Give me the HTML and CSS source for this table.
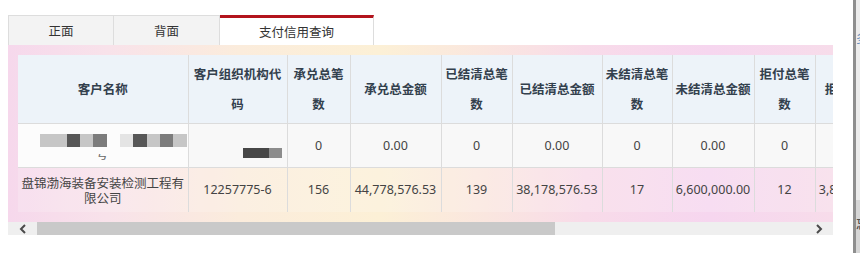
FILE: index.html
```html
<!DOCTYPE html>
<html lang="zh-CN">
<head>
<meta charset="utf-8">
<title>支付信用查询</title>
<link rel="stylesheet" href="styles.css">
</head>
<body>
<div class="screen">
  <div class="main">
    <div class="tabs">
      <div class="tab">正面</div>
      <div class="tab">背面</div>
      <div class="tab active">支付信用查询</div>
    </div>
    <div class="panel">
      <div class="table-clip">
        <table class="grid">
          <colgroup>
            <col class="c-name"><col class="c-code"><col class="c-cnt"><col class="c-amt">
            <col class="c-cnt2"><col class="c-amt2"><col class="c-cnt3"><col class="c-amt3">
            <col class="c-cnt4"><col class="c-amt4">
          </colgroup>
          <thead>
            <tr class="head-row">
              <th>客户名称</th>
              <th>客户组织机构代码</th>
              <th>承兑总笔数</th>
              <th>承兑总金额</th>
              <th>已结清总笔数</th>
              <th>已结清总金额</th>
              <th>未结清总笔数</th>
              <th>未结清总金额</th>
              <th>拒付总笔数</th>
              <th class="nowrap">拒付总金额</th>
            </tr>
          </thead>
          <tbody>
            <tr class="row-blur">
              <td class="blur-name">
                <div class="blocks">
                  <span class="b light w27"></span><span class="b dark w13"></span><span class="b light w13"></span><span class="b mid w14"></span>
                  <span class="b gap w13"></span>
                  <span class="b pale w13"></span><span class="b dark w14"></span><span class="b light w13"></span><span class="b mid w13"></span><span class="b light w14"></span>
                </div>
                <span class="frag"><span>号</span></span>
              </td>
              <td class="blur-code">
                <div class="blocks">
                  <span class="b dark2 w26"></span><span class="b mid2 w13"></span>
                </div>
              </td>
              <td>0</td>
              <td>0.00</td>
              <td>0</td>
              <td>0.00</td>
              <td>0</td>
              <td>0.00</td>
              <td>0</td>
              <td></td>
            </tr>
            <tr class="row-main">
              <td class="name">盘锦渤海装备安装检测工程有限公司</td>
              <td>12257775-6</td>
              <td>156</td>
              <td>44,778,576.53</td>
              <td>139</td>
              <td>38,178,576.53</td>
              <td>17</td>
              <td>6,600,000.00</td>
              <td>12</td>
              <td>3,800,000.00</td>
            </tr>
          </tbody>
        </table>
      </div>
      <div class="hscroll">
        <div class="sb-btn">
          <svg width="8" height="10" viewBox="0 0 8 10"><polyline points="6,1 2,5 6,9" fill="none" stroke="#4a4a4a" stroke-width="2"/></svg>
        </div>
        <div class="sb-thumb"></div>
        <div class="sb-track"></div>
        <div class="sb-btn">
          <svg width="8" height="10" viewBox="0 0 8 10"><polyline points="2,1 6,5 2,9" fill="none" stroke="#4a4a4a" stroke-width="2"/></svg>
        </div>
      </div>
    </div>
  </div>
  <div class="side">
    <div class="side-top"><span class="glyph blue">多</span></div>
    <div class="side-bottom"><span class="glyph">忘</span></div>
  </div>
</div>
</body>
</html>
```

FILE: styles.css
```css
html, body {
  margin: 0;
  padding: 0;
  background: #ffffff;
}

body {
  width: 860px;
  height: 253px;
  overflow: hidden;
  font-family: "Noto Sans", "Noto Sans CJK SC", sans-serif;
  color: #444;
}

.screen {
  display: flex;
  height: 253px;
}

.main {
  width: 853px;
  box-sizing: border-box;
  padding: 15px 0 0 8px;
}

/* Tabs */
.tabs {
  display: flex;
  height: 30px;
}

.tab {
  width: 106px;
  box-sizing: border-box;
  height: 30px;
  border: 1px solid #dddddd;
  border-bottom: none;
  background: #f3f3f3;
  color: #333;
  font-family: "Noto Sans CJK SC", sans-serif;
  font-size: 12.5px;
  line-height: 29px;
  text-align: center;
}

.tab + .tab {
  border-left: none;
}

.tab.active {
  width: 154px;
  background: #ffffff;
  border-top: 3px solid #b3141d;
  line-height: 27px;
}

/* Panel */
.panel {
  width: 825px;
  height: 190px;
  box-sizing: border-box;
  padding-top: 10px;
  background: linear-gradient(90deg,
    #f6d8ec 0%,
    #f8e2ea 12%,
    #fbecdc 28%,
    #fcf0d6 45%,
    #fae6df 58%,
    #f8dbe9 70%,
    #f6d6ef 85%,
    #f7dcea 100%);
}

.table-clip {
  margin-left: 10px;
  width: 815px;
  overflow: hidden;
}

.grid {
  border-collapse: collapse;
  table-layout: fixed;
  width: 879px;
}

.c-name { width: 170px; }
.c-code { width: 99px; }
.c-cnt  { width: 63px; }
.c-amt  { width: 91px; }
.c-cnt2 { width: 71px; }
.c-amt2 { width: 90px; }
.c-cnt3 { width: 70px; }
.c-amt3 { width: 82px; }
.c-cnt4 { width: 61px; }
.c-amt4 { width: 82px; }

.grid th,
.grid td {
  border: 1px solid #dcdcdc;
  padding: 0 2px;
  text-align: center;
  vertical-align: middle;
}

.grid tr > :first-child { border-left: none; }
.grid thead th { border-top: none; }

.head-row {
  height: 68px;
}

.grid th {
  background: #edf3f9;
  color: #33404d;
  font-family: "Noto Sans CJK SC", sans-serif;
  font-size: 12.5px;
  font-weight: 700;
  line-height: 30px;
}

.grid th.nowrap {
  white-space: nowrap;
  overflow: hidden;
}

.grid td {
  font-size: 12.5px;
  color: #444;
  white-space: nowrap;
  overflow: hidden;
}

.row-blur {
  height: 44px;
}

.row-blur td {
  background: #f8f8f8;
}

.row-main {
  height: 45px;
}

.row-main td {
  background: rgba(255, 255, 255, 0.18);
  border-bottom: none;
}

.row-main td.name {
  white-space: normal;
  font-family: "Noto Sans CJK SC", sans-serif;
  line-height: 15px;
}

/* blurred cells */
.blur-name,
.blur-code {
  vertical-align: top !important;
}

.row-blur td.blur-name {
  background: #fcfcfc;
  padding: 10px 0 0 22px;
  text-align: left;
}

.row-blur td.blur-code {
  padding: 24px 0 0 54px;
  text-align: left;
}

.blocks {
  display: flex;
  height: 13px;
}

.blur-code .blocks {
  height: 10px;
}

.b { display: block; height: 100%; }
.w13 { width: 13px; }
.w14 { width: 14px; }
.w26 { width: 26px; }
.w27 { width: 27px; }
.light { background: #c6c6c6; }
.pale  { background: #e4e4e4; }
.dark  { background: #575757; }
.mid   { background: #7c7c7c; }
.gap   { background: transparent; }
.dark2 { background: #474747; }
.mid2  { background: #8c8c8c; }

.frag {
  display: block;
  width: 14px;
  height: 6px;
  margin: 7px 0 0 56px;
  overflow: hidden;
  color: #666;
}

.frag span {
  display: block;
  font-family: "Noto Sans CJK SC", sans-serif;
  font-size: 12px;
  line-height: 12px;
  margin-top: -6px;
}

/* horizontal scrollbar */
.hscroll {
  display: flex;
  height: 13px;
  margin-top: 10px;
  background: #efefef;
}

.sb-btn {
  width: 29px;
  display: flex;
  align-items: center;
  justify-content: center;
}

.sb-thumb {
  width: 518px;
  background: #c9c9c9;
}

.sb-track {
  flex: 1;
}

/* right edge strip */
.side {
  width: 7px;
  box-sizing: border-box;
  border-left: 3px solid #8e8e8e;
  display: flex;
  flex-direction: column;
  overflow: hidden;
}

.side-top {
  height: 200px;
  background: #ececec;
  padding-top: 32px;
  box-sizing: border-box;
}

.side-bottom {
  flex: 1;
  background: #d6d6d6;
  padding-top: 18px;
  box-sizing: border-box;
}

.glyph {
  display: block;
  font-family: "Noto Sans CJK SC", sans-serif;
  font-size: 12px;
  line-height: 12px;
  color: #333;
  white-space: nowrap;
}

.glyph.blue {
  color: #5b86b8;
}
```
